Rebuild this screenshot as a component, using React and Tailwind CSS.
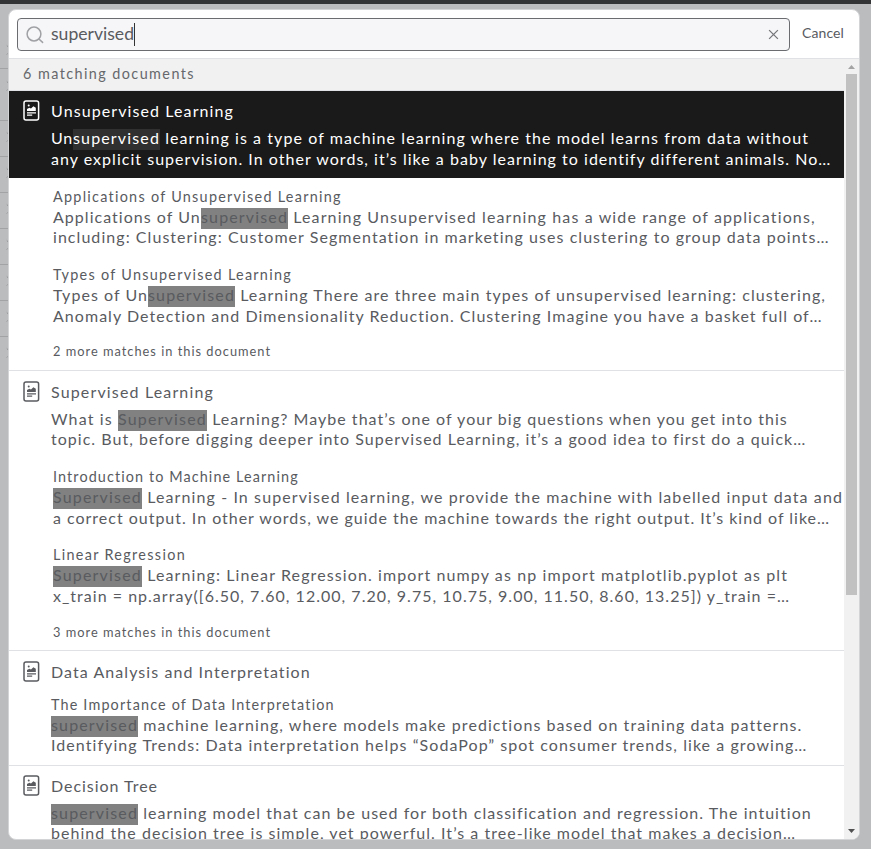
import React, { useLayoutEffect, useRef } from 'react';

// A run of text whose tracking is adjusted so that it fills a given width.
function Fit({ w, children, className = '' }) {
  const box = useRef(null);
  useLayoutEffect(() => {
    const el = box.current;
    const inner = el.firstChild;
    inner.style.letterSpacing = '0px';
    const natural = inner.getBoundingClientRect().width;
    inner.style.letterSpacing = (w - natural) / children.length + 'px';
  }, [w, children]);
  return (
    <span ref={box} className={`inline-block shrink-0 whitespace-pre ${className}`} style={{ width: w }}>
      <span>{children}</span>
    </span>
  );
}

function Line({ parts, dark, tight }) {
  return (
    <div className={`flex text-[16px] leading-[18px] ${tight ? 'h-5' : 'h-[20.6px]'}`}>
      {parts.map(([text, w, hit], i) => (
        <Fit key={i} w={w} className={hit ? (dark ? 'h-[21px] bg-[#303030]' : 'h-[21px] bg-[#818181]') : ''}>
          {text}
        </Fit>
      ))}
    </div>
  );
}

function DocIcon() {
  return (
    <svg className="h-[21px] w-[17px] shrink-0" viewBox="0 0 17 21" fill="none">
      <rect x="1" y="1" width="14.6" height="19" rx="2" stroke="currentColor" strokeWidth="1.5" />
      <path d="M4 11V9l2.4-1.2 1.6.7 2.4-2.3 2.4 1.6V11z" fill="currentColor" />
      <circle cx="5.7" cy="5.4" r="1" fill="currentColor" />
      <path d="M4 12.8h9M4 15.1h5.2" stroke="currentColor" strokeWidth="1.3" />
    </svg>
  );
}

function Title({ text, w }) {
  return (
    <div className="flex h-[21px] pl-[14px]">
      <DocIcon />
      <Fit w={w} className="ml-[11px] text-[16px] leading-[21px]">{text}</Fit>
    </div>
  );
}

function Sub({ title, w, lines, tight, className = 'pl-11' }) {
  return (
    <div className={className}>
      <div className="flex h-[22px] text-[14.4px] leading-[22px]">
        <Fit w={w}>{title}</Fit>
      </div>
      {lines.map((l, i) => <Line key={i} parts={l} tight={tight && i === 0} />)}
    </div>
  );
}

function More({ text }) {
  return (
    <div className="flex h-5 pl-11 text-[12.8px] leading-5">
      <Fit w={218}>{text}</Fit>
    </div>
  );
}

export default function App() {
  return (
    <div className="flex h-[849px] w-[871px] flex-col overflow-hidden bg-[#bbbcbe] font-['Lato','Noto_Sans',sans-serif] text-[#595b5f]">
      <div className="h-1 shrink-0 bg-[#333436]" />
      <div className="flex pt-[5px]">
        <svg className="h-[830px] w-2 shrink-0" viewBox="0 0 8 830" fill="none" stroke="#a2a3a5">
          {[59, 111, 147, 183, 219, 255, 291, 327].map((y) => <path key={y} d={`M0 ${y + 0.5}H8`} />)}
          {[41, 77, 128, 164, 200, 236, 272, 308, 344].map((y) => (
            <path key={y} d={`M6.8 ${y - 4.5}l1.2 1.2M6.8 ${y + 4.5}l1.2-1.2`} stroke="#8f9092" />
          ))}
        </svg>
        <div className="flex h-[831px] w-[852px] flex-col overflow-hidden rounded-lg border border-[#d3d4d6] bg-white">
          <div className="flex h-[49px] shrink-0 items-start border-b border-[#dfe1e5] pl-2 pt-2">
            <div className="flex h-[33px] w-[773px] items-center rounded-[4px] border border-[#6b6c70] bg-[#f6f6f9]">
              <svg className="ml-2 h-[18px] w-[18px]" viewBox="0 0 18 18" fill="none" stroke="#a0a1a4" strokeWidth="1.5" strokeLinecap="round">
                <circle cx="8" cy="8" r="6.9" />
                <path d="M13.2 13.2l3.4 3.2" />
              </svg>
              <Fit w={83} className="ml-[7px] h-6 text-[17.6px] leading-[22px]">supervised</Fit>
              <span className="h-[23px] w-px bg-[#333]" />
              <svg className="ml-auto mr-[10px] h-[11px] w-[11px]" viewBox="0 0 12 12" stroke="#77787b" strokeWidth="1.4">
                <path d="M1.2 1.2l9.6 9.6M10.8 1.2l-9.6 9.6" />
              </svg>
            </div>
            <Fit w={42} className="ml-[12px] mt-[5px] text-[14px] leading-5">Cancel</Fit>
          </div>
          <div className="flex min-h-0 flex-1">
            <div className="w-[835px] overflow-hidden">
              <div className="flex h-8 border-b border-[#dfe1e5] bg-[#f1f1f1] pl-[14px] text-[14.4px] leading-[30px] text-[#66686c]">
                <Fit w={172}>6 matching documents</Fit>
              </div>

              <div className="h-[87px] bg-[#1a1a1a] pt-[9px] text-white">
                <Title text="Unsupervised Learning" w={183} />
                <div className="pl-[42px] pt-2">
                  <Line dark parts={[['Un', 22], ['supervised', 87, true], [' learning is a type of machine learning where the model learns from data without', 649]]} />
                  <Line parts={[['any explicit supervision. In other words, it’s like a baby learning to identify different animals. No…', 780]]} />
                </div>
              </div>
              <div className="h-[193px] border-b border-[#dfe1e5] pt-2">
                <Sub tight title="Applications of Unsupervised Learning" w={289} lines={[
                  [['Applications of Un', 148], ['supervised', 87, true], [' Learning Unsupervised learning has a wide range of applications,', 528]],
                  [['including: Clustering: Customer Segmentation in marketing uses clustering to group data points…', 777]],
                ]} />
                <Sub className="mt-[15.6px] pl-11" title="Types of Unsupervised Learning" w={239} lines={[
                  [['Types of Un', 95], ['supervised', 87, true], [' Learning There are three main types of unsupervised learning: clustering,', 591]],
                  [['Anomaly Detection and Dimensionality Reduction. Clustering Imagine you have a basket full of…', 770]],
                ]} />
                <div className="pt-[14px]"><More text="2 more matches in this document" /></div>
              </div>

              <div className="h-[280px] border-b border-[#dfe1e5] pt-[10px]">
                <Title text="Supervised Learning" w={163} />
                <div className="pl-[42px] pt-2">
                  <Line tight parts={[['What is ', 67], ['Supervised', 89, true], [' Learning? Maybe that’s one of your big questions when you get into this', 581]]} />
                  <Line parts={[['topic. But, before digging deeper into Supervised Learning, it’s a good idea to first do a quick…', 755]]} />
                </div>
                <Sub className="mt-[15.6px] pl-11" title="Introduction to Machine Learning" w={246} lines={[
                  [['Supervised', 89, true], [' Learning - In supervised learning, we provide the machine with labelled input data and', 701]],
                  [['a correct output. In other words, we guide the machine towards the right output. It’s kind of like…', 777]],
                ]} />
                <Sub className="mt-[15px] pl-11" title="Linear Regression" w={133} lines={[
                  [['Supervised', 89, true], [' Learning: Linear Regression. import numpy as np import matplotlib.pyplot as plt', 646]],
                  [['x_train = np.array([6.50, 7.60, 12.00, 7.20, 9.75, 10.75, 9.00, 11.50, 8.60, 13.25]) y_train =…', 737]],
                ]} />
                <div className="pt-[14px]"><More text="3 more matches in this document" /></div>
              </div>

              <div className="h-[115px] border-b border-[#dfe1e5] pt-[10px]">
                <Title text="Data Analysis and Interpretation" w={260} />
                <Sub tight className="mt-3 pl-[42px]" title="The Importance of Data Interpretation" w={284} lines={[
                  [['supervised', 87, true], [' machine learning, where models make predictions based on training data patterns.', 664]],
                  [['Identifying Trends: Data interpretation helps “SodaPop” spot consumer trends, like a growing…', 757]],
                ]} />
              </div>

              <div className="pt-[9px]">
                <Title text="Decision Tree" w={107} />
                <div className="pl-[42px] pt-2">
                  <Line tight parts={[['supervised', 87, true], [' learning model that can be used for both classification and regression. The intuition', 674]]} />
                  <Line parts={[['behind the decision tree is simple, yet powerful. It’s a tree-like model that makes a decision…', 745]]} />
                </div>
              </div>
            </div>
            <div className="flex w-[15px] shrink-0 flex-col items-center bg-[#f1f1f1]">
              <svg className="h-[15px] w-[15px] shrink-0" viewBox="0 0 15 15"><path d="M4 10h7L7.5 6z" fill="#a3a3a3" /></svg>
              <div className="h-[521px] w-[11px] bg-[#c1c1c1]" />
              <svg className="mt-auto h-[15px] w-[15px] shrink-0" viewBox="0 0 15 15"><path d="M4 5h7L7.5 9z" fill="#505050" /></svg>
            </div>
          </div>
        </div>
      </div>
    </div>
  );
}
